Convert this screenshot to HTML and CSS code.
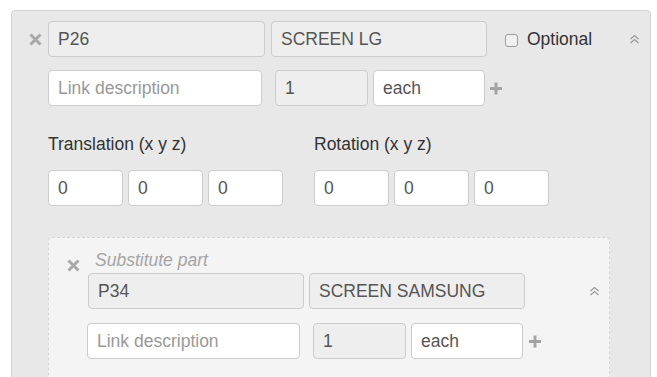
FILE: index.html
```html
<!DOCTYPE html>
<html lang="en">
<head>
  <meta charset="UTF-8" />
  <title>Part link</title>
  <link rel="stylesheet" href="styles.css">
</head>
<body>
  <div class="part-panel">
    <div class="part-row">
      <span class="remove-btn">
        <svg width="13" height="13" viewBox="0 0 13 13"><path d="M1.5 1.5L11.5 11.5M11.5 1.5L1.5 11.5" /></svg>
      </span>
      <input class="field field-id" type="text" value="P26" readonly />
      <input class="field field-name" type="text" value="SCREEN LG" readonly />
      <label class="optional"><input type="checkbox" /> Optional</label>
      <span class="collapse-btn">
        <svg width="11" height="10" viewBox="0 0 11 10"><path d="M1.5 5L5.5 1.5L9.5 5M1.5 9L5.5 5.5L9.5 9" /></svg>
      </span>
    </div>

    <div class="link-row">
      <input class="field field-desc" type="text" placeholder="Link description" />
      <input class="field field-qty" type="text" value="1" readonly />
      <input class="field field-unit" type="text" value="each" />
      <span class="add-btn">
        <svg width="12" height="13" viewBox="0 0 12 13"><path d="M4.5 0.5H7.5V5H12V8H7.5V12.5H4.5V8H0V5H4.5Z" /></svg>
      </span>
    </div>

    <div class="transform">
      <div class="transform-group">
        <div class="transform-label">Translation (x y z)</div>
        <div class="xyz">
          <input class="field field-xyz" type="text" value="0" />
          <input class="field field-xyz" type="text" value="0" />
          <input class="field field-xyz" type="text" value="0" />
        </div>
      </div>
      <div class="transform-group">
        <div class="transform-label">Rotation (x y z)</div>
        <div class="xyz">
          <input class="field field-xyz" type="text" value="0" />
          <input class="field field-xyz" type="text" value="0" />
          <input class="field field-xyz" type="text" value="0" />
        </div>
      </div>
    </div>

    <div class="substitute">
      <span class="remove-btn sub-remove">
        <svg width="13" height="13" viewBox="0 0 13 13"><path d="M1.5 1.5L11.5 11.5M11.5 1.5L1.5 11.5" /></svg>
      </span>
      <div class="sub-body">
        <div class="sub-title">Substitute part</div>
        <div class="part-row sub-part-row">
          <input class="field field-id" type="text" value="P34" readonly />
          <input class="field field-name" type="text" value="SCREEN SAMSUNG" readonly />
          <span class="collapse-btn sub-collapse">
            <svg width="11" height="10" viewBox="0 0 11 10"><path d="M1.5 5L5.5 1.5L9.5 5M1.5 9L5.5 5.5L9.5 9" /></svg>
          </span>
        </div>
        <div class="link-row sub-link-row">
          <input class="field field-desc" type="text" placeholder="Link description" />
          <input class="field field-qty" type="text" value="1" readonly />
          <input class="field field-unit" type="text" value="each" />
          <span class="add-btn">
            <svg width="12" height="13" viewBox="0 0 12 13"><path d="M4.5 0.5H7.5V5H12V8H7.5V12.5H4.5V8H0V5H4.5Z" /></svg>
          </span>
        </div>
      </div>
    </div>
  </div>
</body>
</html>
```

FILE: styles.css
```css
body {
  margin: 0;
  padding: 10px 6px 0 11px;
  background-color: #ffffff;
  font-family: 'Liberation Sans', Arial, sans-serif;
  font-size: 17.5px;
  color: #333;
  overflow: hidden;
}

.part-panel {
  background-color: #e8e8e8;
  border: 1px solid #d2d2d2;
  border-radius: 4px;
  padding: 10px 0 40px 17px;
  min-height: 420px;
}

/* shared text field */
.field {
  box-sizing: border-box;
  height: 36px;
  padding: 0 9px;
  border: 1px solid #cccccc;
  border-radius: 4px;
  background-color: #ffffff;
  color: #555;
  font-family: inherit;
  font-size: 17.5px;
  margin: 0;
  outline: none;
}

.field[readonly] {
  background-color: #eeeeee;
}

.field::placeholder {
  color: #999;
}

.field-id {
  width: 217px;
}

.field-name {
  width: 216px;
  margin-left: 6px;
}

.field-desc {
  width: 214px;
}

.field-qty {
  width: 93px;
  margin-left: 13px;
}

.field-unit {
  width: 112px;
  margin-left: 5px;
}

.field-xyz {
  width: 75px;
}

/* rows */
.part-row {
  display: flex;
  align-items: center;
}

.link-row {
  display: flex;
  align-items: center;
  margin-top: 13px;
  padding-left: 19px;
}

.remove-btn {
  display: flex;
  width: 13px;
  margin-right: 6px;
}

.remove-btn svg path {
  stroke: #a8a8a8;
  stroke-width: 3;
  fill: none;
}

.collapse-btn {
  display: flex;
  margin-left: 37px;
}

.collapse-btn svg path {
  stroke: #9a9a9a;
  stroke-width: 1.2;
  fill: none;
}

.add-btn {
  display: flex;
  margin-left: 5px;
}

.add-btn svg path {
  fill: #a3a3a3;
}

.optional {
  display: flex;
  align-items: center;
  margin-left: 18px;
  color: #333;
}

.optional input {
  appearance: none;
  width: 13px;
  height: 13px;
  margin: 2px 9px 0 0;
  border: 1px solid #9c9c9c;
  border-radius: 3px;
  background-color: #f0f0f0;
}

/* translation / rotation */
.transform {
  display: flex;
  gap: 31px;
  margin-top: 28px;
  padding-left: 19px;
}

.transform-label {
  line-height: 20px;
  margin-bottom: 16px;
}

.xyz {
  display: flex;
  gap: 5px;
}

/* substitute block */
.substitute {
  display: flex;
  margin: 31px 0 0 19px;
  width: 562px;
  box-sizing: border-box;
  min-height: 200px;
  padding: 12px 0 0 18px;
  background-color: #f4f4f4;
  border: 1px dashed #d6d6d6;
  border-radius: 4px;
}

.sub-remove {
  align-self: flex-start;
  margin-top: 9px;
  margin-right: 7px;
}

.sub-title {
  font-style: italic;
  color: #a5a5a5;
  line-height: 20px;
  padding-left: 8px;
  margin-bottom: 3px;
}

.sub-part-row .field-id {
  margin-left: 1px;
  width: 216px;
}

.sub-part-row .field-name {
  margin-left: 5px;
}

.sub-collapse {
  margin-left: 64px;
}

.sub-link-row {
  padding-left: 0;
  margin-top: 14px;
}

.sub-link-row .field-desc {
  width: 213px;
}

.sub-link-row .add-btn {
  margin-left: 6px;
}
```
